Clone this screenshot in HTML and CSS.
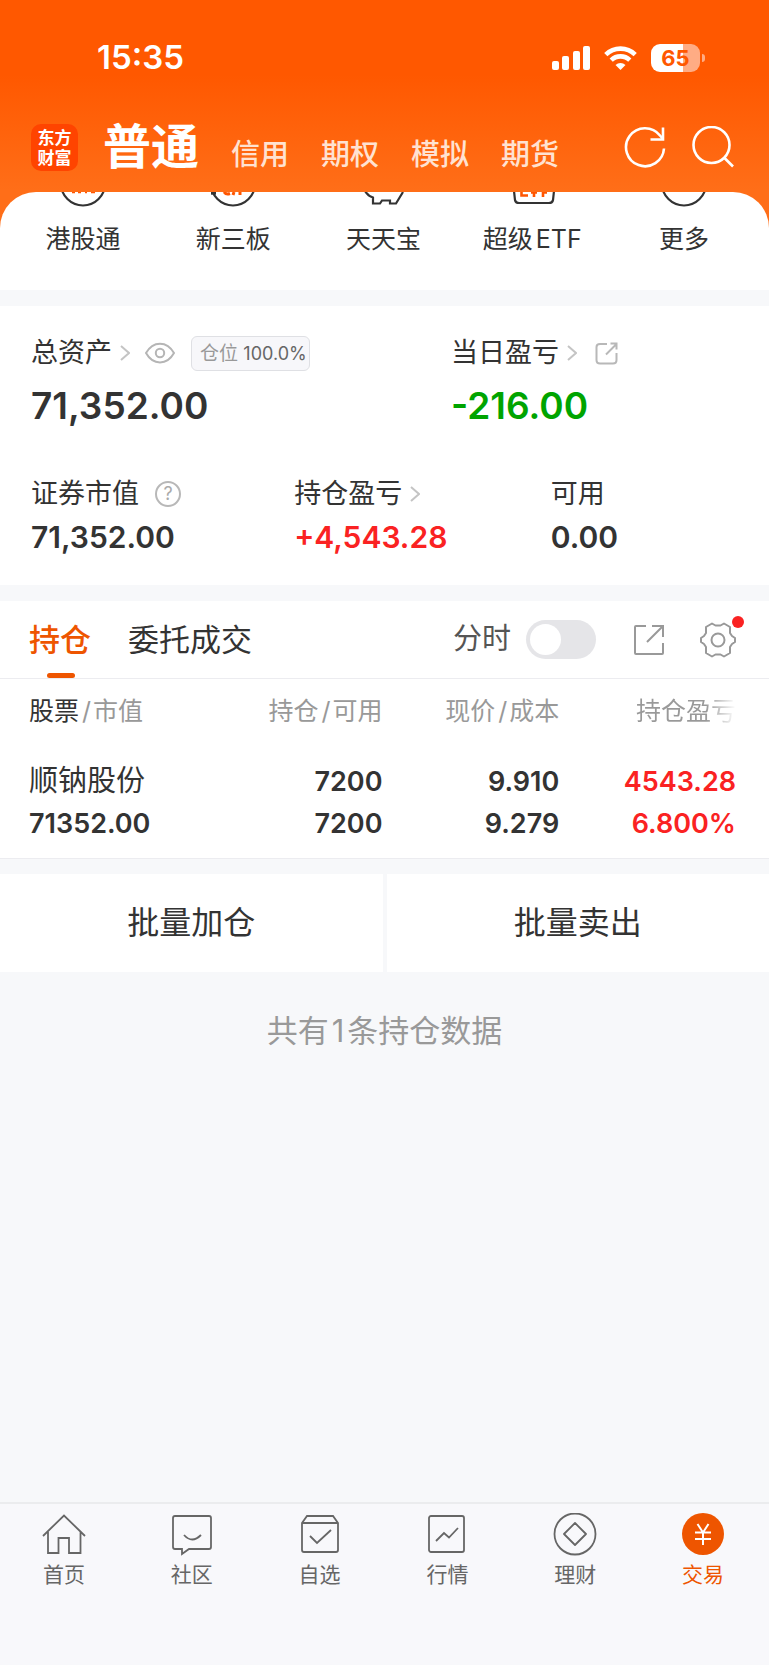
FILE: index.html
```html
<!DOCTYPE html>
<html lang="zh-CN">
<head>
  <meta charset="UTF-8">
  <meta name="viewport" content="width=device-width, initial-scale=1.0">
  <title>东方财富 交易</title>
  <link rel="stylesheet" href="styles.css">
</head>
<body>
  <div class="top">
    <div class="status-bar">
      <span class="time">15:35</span>
      <div class="status-icons">
        <svg width="38" height="24" viewBox="0 0 38 24" fill="#fff">
          <rect x="0" y="15" width="7" height="9" rx="2"/>
          <rect x="10" y="10" width="7" height="14" rx="2"/>
          <rect x="21" y="5" width="7" height="19" rx="2"/>
          <rect x="31" y="0" width="7" height="24" rx="2"/>
        </svg>
        <svg width="33" height="24" viewBox="0 0 33 24" fill="none" stroke="#fff" stroke-width="4.6">
          <path d="M1.8 8.6a21 21 0 0 1 29.4 0"/>
          <path d="M7.2 14.2a13.3 13.3 0 0 1 18.6 0"/>
          <path d="M16.5 24l-5-5a7.3 7.3 0 0 1 10 0z" fill="#fff" stroke="none"/>
        </svg>
        <span class="battery">65</span>
      </div>
    </div>

    <header class="nav">
      <a class="logo" href="#">东方<br>财富</a>
      <h1>普通</h1>
      <nav class="accounts">
        <a href="#">信用</a>
        <a href="#">期权</a>
        <a href="#">模拟</a>
        <a href="#">期货</a>
      </nav>
      <div class="nav-actions">
        <button aria-label="刷新">
          <svg width="42" height="42" viewBox="0 0 42 42" fill="none" stroke="#fff" stroke-width="2.6">
            <path d="M40 22.5A19 19 0 1 1 36 9.5L39 13"/>
            <path d="M39 1.5V13.5H26.5"/>
          </svg>
        </button>
        <button aria-label="搜索">
          <svg width="42" height="42" viewBox="0 0 42 42" fill="none" stroke="#fff" stroke-width="2.6">
            <circle cx="19.5" cy="19" r="18"/>
            <path d="M32 31.5L41 40.5"/>
          </svg>
        </button>
      </div>
    </header>

    <div class="quick">
      <a href="#">
        <svg width="50" height="16" viewBox="0 0 50 16">
          <circle cx="25" cy="-8.5" r="22"/>
          <path class="accent" d="M14 .5h3M20 .5h3M27 .5h2M33 .5h4" stroke-width="1.4"/>
        </svg>
        <span>港股通</span>
      </a>
      <a href="#">
        <svg width="50" height="16" viewBox="0 0 50 16">
          <circle cx="25" cy="-8.5" r="22"/>
          <path d="M3 1.2h5" stroke-width="3"/>
          <path class="accent" d="M16 0q2 3 6 1.500M26 0l-1 3M32 0v3" stroke-width="3"/>
        </svg>
        <span>新三板</span>
      </a>
      <a href="#">
        <svg width="50" height="16" viewBox="0 0 50 16">
          <path d="M7 -1q3 5 8 6.5V11.5h7l2-3h8v3h6L45 0"/>
        </svg>
        <span>天天宝</span>
      </a>
      <a href="#">
        <svg width="50" height="16" viewBox="0 0 50 16">
          <path d="M5 -1l1 9q.5 3 4 3h30q3.500 0 4-3l1-9"/>
          <path class="accent" d="M12.500 0V3.500H19M25 0V5M34 0V5M22 .5h6M33 .5h5" stroke-width="2.600"/>
        </svg>
        <span>超级<span class="latin">ETF</span></span>
      </a>
      <a href="#">
        <svg width="50" height="16" viewBox="0 0 50 16">
          <circle cx="25" cy="-8.5" r="22"/>
        </svg>
        <span>更多</span>
      </a>
    </div>
  </div>

  <section class="assets">
    <div class="assets-main">
      <div>
        <div class="label">
          总资产
          <svg class="chevron" width="10" height="16" viewBox="0 0 10 16"><path d="M1 1l8 7-8 7"/></svg>
          <button class="eye" aria-label="隐藏金额">
            <svg width="30" height="22" viewBox="0 0 30 22" fill="none" stroke="#b5b5b5" stroke-width="2">
              <path d="M1 11C8-1.5 22-1.5 29 11 22 23.5 8 23.5 1 11z"/>
              <circle cx="15" cy="11" r="4.2"/>
            </svg>
          </button>
          <span class="badge">仓位 <b>100.0%</b></span>
        </div>
        <div class="value big">71,352.00</div>
      </div>
      <div>
        <div class="label">
          当日盈亏
          <svg class="chevron" width="10" height="16" viewBox="0 0 10 16"><path d="M1 1l8 7-8 7"/></svg>
          <button class="share" aria-label="分享当日盈亏">
            <svg width="23" height="23" viewBox="0 0 23 23" fill="none" stroke="#b8b8b8" stroke-width="2">
              <path d="M12 2H5Q1.500 2 1.500 5V18Q1.500 21.500 5 21.500H18Q21.500 21.500 21.500 18V11"/>
              <path d="M11 12.500L21.500 2M15.500 1.500h6V7.500"/>
            </svg>
          </button>
        </div>
        <div class="value big green">-216.00</div>
      </div>
    </div>
    <div class="assets-sub">
      <div>
        <div class="label">
          证券市值
          <button class="help" aria-label="说明">?</button>
        </div>
        <div class="value">71,352.00</div>
      </div>
      <div>
        <div class="label">
          持仓盈亏
          <svg class="chevron" width="10" height="16" viewBox="0 0 10 16"><path d="M1 1l8 7-8 7"/></svg>
        </div>
        <div class="value red">+4,543.28</div>
      </div>
      <div>
        <div class="label">可用</div>
        <div class="value">0.00</div>
      </div>
    </div>
  </section>

  <section class="holdings">
    <div class="tabs">
      <button class="tab active">持仓</button>
      <button class="tab">委托成交</button>
      <label class="minute">分时 <input type="checkbox"></label>
      <button class="tool" aria-label="分享持仓">
        <svg width="32" height="32" viewBox="0 0 32 32" fill="none" stroke="#999" stroke-width="2">
          <path d="M13 2H3Q2 2 2 3V29Q2 30 3 30H29Q30 30 30 29V19"/>
          <path d="M14 18L30 2M19 2H30V13"/>
        </svg>
      </button>
      <button class="tool settings" aria-label="设置">
        <svg width="36" height="36" viewBox="0 0 36 36" fill="none" stroke="#999" stroke-width="2" stroke-linejoin="round">
          <path d="M15.5 3.5H20.5L24 1.5 30 5V11L32 14 35 16V20L32 22 30 25V31L24 34.5 20.5 32.5H15.5L12 34.5 6 31V25L4 22 1 20V16L4 14 6 11V5L12 1.5z"/>
          <circle cx="18" cy="18" r="6.5"/>
        </svg>
      </button>
    </div>

    <table>
      <thead>
        <tr>
          <th><em>股票</em><i>/</i>市值</th>
          <th>持仓<i>/</i>可用</th>
          <th>现价<i>/</i>成本</th>
          <th><span class="fade">持仓盈亏</span></th>
        </tr>
      </thead>
      <tbody>
        <tr>
          <td><span class="stock">顺钠股份</span><br>71352.00</td>
          <td>7200<br>7200</td>
          <td>9.910<br>9.279</td>
          <td class="red">4543.28<br>6.800%</td>
        </tr>
      </tbody>
    </table>
  </section>

  <div class="batch">
    <button>批量加仓</button>
    <button>批量卖出</button>
  </div>

  <p class="total">共有<span class="latin">1</span>条持仓数据</p>

  <nav class="tabbar">
    <a href="#">
      <svg width="44" height="44" viewBox="0 0 44 44">
        <path d="M1 23L22 2.5 43 23M6 19V40H16.5V25H27V40H38.5V19"/>
      </svg>
      首页
    </a>
    <a href="#">
      <svg width="44" height="44" viewBox="0 0 44 44">
        <path d="M5 3H39Q41 3 41 5V34Q41 36 39 36H19L12 41V36H5Q3 36 3 34V5Q3 3 5 3z"/>
        <path d="M14 22Q22 31 31 22"/>
      </svg>
      社区
    </a>
    <a href="#">
      <svg width="44" height="44" viewBox="0 0 44 44">
        <path d="M4 10L9 3H35L40 10V37Q40 39 38 39H6Q4 39 4 37zM4 10H40"/>
        <path d="M12 23L19 30 33 17"/>
      </svg>
      自选
    </a>
    <a href="#">
      <svg width="44" height="44" viewBox="0 0 44 44">
        <rect x="4" y="3" width="35" height="36" rx="2"/>
        <path d="M11 28L19 20 24 24.5 33 15"/>
      </svg>
      行情
    </a>
    <a href="#">
      <svg width="44" height="44" viewBox="0 0 44 44">
        <circle cx="22" cy="21" r="20.5"/>
        <path d="M22 10L33 21 22 32 11 21z" stroke-linejoin="round"/>
      </svg>
      理财
    </a>
    <a href="#" class="active">
      <svg width="44" height="44" viewBox="0 0 44 44">
        <circle class="coin" cx="22" cy="21" r="21"/>
        <path class="yen" d="M16.5 11L22 19.5 27.5 11M14 19.5H30M14 26H30M22 19V32"/>
      </svg>
      交易
    </a>
  </nav>
</body>
</html>
```
FILE: styles.css
```css
* {
  box-sizing: border-box;
}
body {
  margin: 0;
  min-height: 100vh;
  display: flex;
  flex-direction: column;
  background: #f7f8fa;
  color: #333;
  font-family: Inter, "Noto Sans CJK SC", sans-serif;
  font-size: 27px;
  line-height: 1.2;
  white-space: nowrap;
}
a {
  color: inherit;
  text-decoration: none;
}
button {
  border: none;
  background: none;
  padding: 0;
  color: inherit;
  font: inherit;
  cursor: pointer;
}
svg {
  display: block;
  flex-shrink: 0;
}
.red {
  color: #fa2222;
}
.green {
  color: #00a400;
}
.latin {
  margin: 0 3px;
}

/* Header */
.top {
  background: linear-gradient(#ff5800 75px, #ff6e18 190px);
}
.status-bar {
  display: flex;
  justify-content: space-between;
  align-items: center;
  height: 114px;
  padding: 2px 63px 0 97px;
  color: #fff;
}
.time {
  font-size: 33px;
  font-weight: 600;
}
.status-icons {
  display: flex;
  align-items: center;
  gap: 14px;
}
.battery {
  position: relative;
  width: 49px;
  height: 28px;
  margin-right: 6px;
  border-radius: 9px;
  background: linear-gradient(90deg, #fff 66%, #ffac84 66%);
  color: #ff5800;
  font-size: 22px;
  font-weight: 700;
  line-height: 28px;
  text-align: center;
}
.battery::after {
  content: "";
  position: absolute;
  left: 51px;
  top: 10px;
  width: 3px;
  height: 8px;
  border-radius: 0 3px 3px 0;
  background: #ffac84;
}
.nav {
  display: flex;
  align-items: center;
  padding: 9px 35px 21px 31px;
  color: #fff;
}
.logo {
  width: 47px;
  height: 47px;
  padding-top: 4px;
  border-radius: 10px;
  background: #ff4400;
  font-size: 17px;
  font-weight: 700;
  line-height: 20px;
  text-align: center;
}
.nav h1 {
  margin: 0 0 0 25px;
  font-size: 48px;
  font-weight: 700;
  line-height: 48px;
}
.accounts {
  display: flex;
  align-self: flex-end;
  gap: 32px;
  margin-left: 32px;
  color: #ffe2d1;
  font-size: 29px;
  font-weight: 500;
  line-height: 32px;
}
.nav-actions {
  display: flex;
  gap: 26px;
  margin-left: auto;
}

.quick {
  display: grid;
  grid-template-columns: repeat(5, 1fr);
  padding: 0 10px 36px 8px;
  border-radius: 36px 36px 0 0;
  background: #fff;
  font-size: 25px;
  line-height: 30px;
}
.quick a {
  display: flex;
  flex-direction: column;
  align-items: center;
  gap: 16px;
}
.quick svg {
  fill: none;
  stroke: #333;
  stroke-width: 2.2;
}
.quick .accent {
  stroke: #ff5500;
}

/* Assets */
.assets {
  margin-top: 16px;
  padding: 28px 32px 28px 31px;
  background: #fff;
}
.assets-main {
  display: grid;
  grid-template-columns: 47fr 32fr;
}
.assets-sub {
  display: grid;
  grid-template-columns: 41fr 40fr 29fr;
  margin-top: 45px;
}
.label {
  display: flex;
  align-items: center;
  height: 38px;
}
.chevron {
  margin-left: 8px;
  fill: none;
  stroke: #c4c4c4;
  stroke-width: 2;
}
.eye {
  margin-left: 15px;
}
.share {
  margin-left: 18px;
}
.help {
  width: 26px;
  height: 26px;
  margin-left: 16px;
  border: 2px solid #b8b8b8;
  border-radius: 50%;
  color: #aaa;
  font-size: 18px;
  line-height: 22px;
}
.badge {
  height: 35px;
  margin-left: 16px;
  padding: 0 2px 0 8px;
  border: 1px solid #dfe0e4;
  border-radius: 6px;
  background: #f7f7fa;
  color: #999;
  font-size: 19px;
  line-height: 33px;
}
.badge b {
  color: #666;
  font-size: 18px;
  font-weight: 400;
}
.value {
  margin-top: 4px;
  font-size: 30px;
  font-weight: 600;
  line-height: 40px;
}
.value.big {
  margin-top: 10px;
  font-size: 37px;
  line-height: 48px;
}

/* Holdings */
.holdings {
  margin-top: 16px;
  border-bottom: 1px solid #ececf0;
  background: #fff;
}
.tabs {
  display: flex;
  align-items: center;
  height: 78px;
  padding: 0 33px 0 29px;
  border-bottom: 1px solid #ececf0;
}
.tab {
  height: 77px;
  margin-right: 37px;
  font-size: 31px;
}
.tab.active {
  position: relative;
  color: #ee5500;
  font-weight: 500;
}
.tab.active::after {
  content: "";
  position: absolute;
  left: 18px;
  bottom: 0;
  width: 28px;
  height: 5px;
  border-radius: 3px;
  background: #ee5500;
}
.minute {
  display: flex;
  align-items: center;
  gap: 15px;
  margin-left: auto;
  color: #555;
  font-size: 29px;
}
.minute input {
  appearance: none;
  width: 70px;
  height: 39px;
  margin: 0;
  padding: 4px;
  border-radius: 20px;
  background: #e5e5e8;
}
.minute input::before {
  content: "";
  display: block;
  width: 31px;
  height: 31px;
  border-radius: 50%;
  background: #fff;
}
.minute input:checked {
  background: #ee5500;
}
.minute input:checked::before {
  margin-left: auto;
}
.tool {
  margin-left: 37px;
}
.settings {
  position: relative;
  margin-left: 35px;
}
.settings::after {
  content: "";
  position: absolute;
  top: -6px;
  right: -8px;
  width: 12px;
  height: 12px;
  border-radius: 50%;
  background: #fa2222;
}
table {
  width: calc(100% - 62px);
  margin-left: 29px;
  border-collapse: collapse;
  table-layout: fixed;
}
th {
  height: 64px;
  padding: 0;
  color: #999;
  font-size: 25px;
  font-weight: 400;
  text-align: right;
}
th em {
  color: #333;
  font-style: normal;
}
th i {
  margin: 0 2px 0 3px;
  font-style: normal;
}
td {
  padding: 17px 0 13px;
  font-size: 27px;
  font-weight: 600;
  line-height: 42px;
  text-align: right;
}
th:first-child, td:first-child {
  text-align: left;
}
.stock {
  font-size: 29px;
  font-weight: 400;
}
.fade {
  background: linear-gradient(90deg, #999 70%, #fff);
  background-clip: text;
  color: transparent;
}

.batch {
  display: grid;
  grid-template-columns: 1fr 1fr;
  gap: 4px;
  margin-top: 15px;
}
.batch button {
  height: 98px;
  background: #fff;
  font-size: 32px;
}
.total {
  margin: 39px 0;
  color: #999;
  font-size: 31px;
  line-height: 40px;
  text-align: center;
}

/* Bottom tab bar */
.tabbar {
  display: grid;
  grid-template-columns: repeat(6, 1fr);
  height: 163px;
  margin-top: auto;
  padding: 9px 2px 0 0;
  border-top: 2px solid #ebecee;
  background: #f8f8fb;
  color: #666;
  font-size: 21px;
  line-height: 28px;
}
.tabbar a {
  display: flex;
  flex-direction: column;
  align-items: center;
  gap: 4px;
}
.tabbar svg {
  fill: none;
  stroke: #666;
  stroke-width: 1.8;
}
.tabbar .active {
  color: #ee5500;
}
.tabbar .coin {
  fill: #ee5500;
  stroke: none;
}
.tabbar .yen {
  stroke: #fff;
  stroke-width: 2;
}
```
